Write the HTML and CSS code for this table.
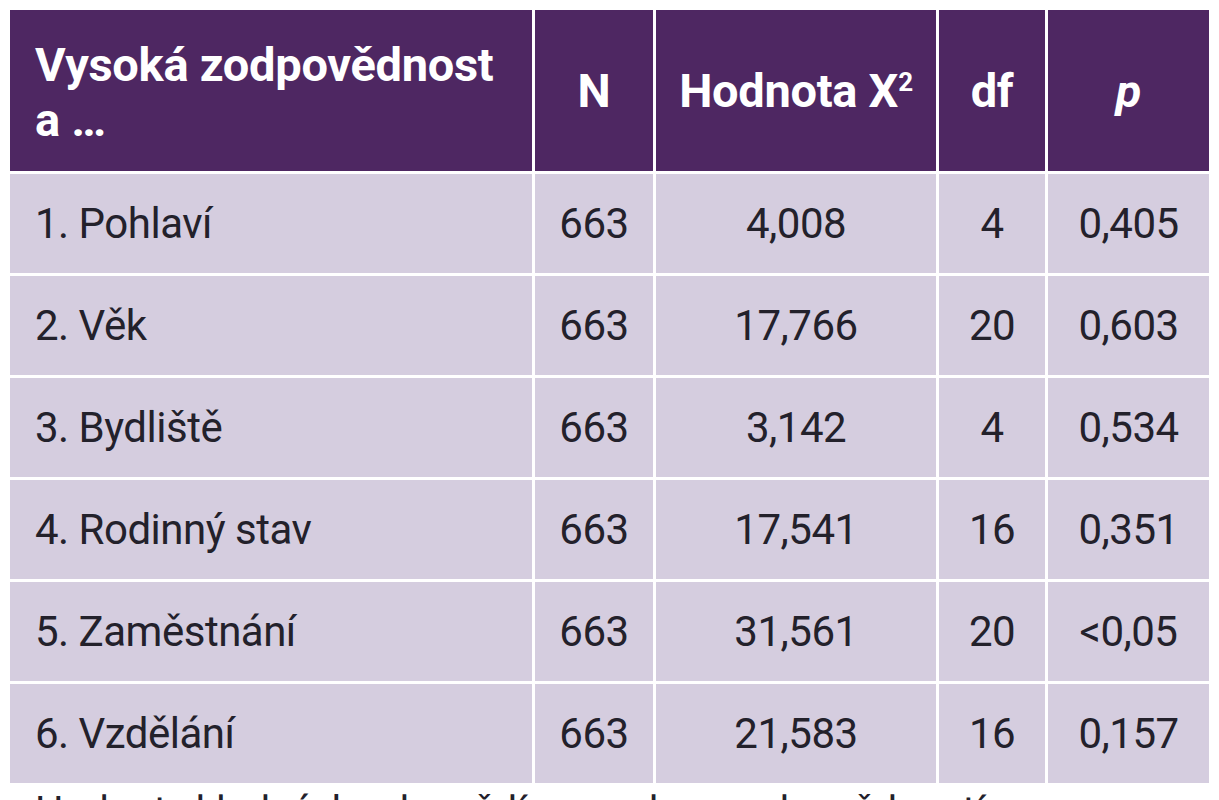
FILE: index.html
```html
<!DOCTYPE html>
<html lang="cs">
<head>
<meta charset="utf-8">
<title>Vysoká zodpovědnost</title>
<link rel="stylesheet" href="styles.css">
</head>
<body>
<table class="stats">
  <thead>
    <tr>
      <th class="c-label">Vysoká zodpovědnost<br>a …</th>
      <th class="c-n">N</th>
      <th class="c-x">Hodnota X<sup>2</sup></th>
      <th class="c-df">df</th>
      <th class="c-p"><i>p</i></th>
    </tr>
  </thead>
  <tbody>
    <tr><td class="c-label">1. Pohlaví</td><td>663</td><td>4,008</td><td>4</td><td>0,405</td></tr>
    <tr><td class="c-label">2. Věk</td><td>663</td><td>17,766</td><td>20</td><td>0,603</td></tr>
    <tr><td class="c-label">3. Bydliště</td><td>663</td><td>3,142</td><td>4</td><td>0,534</td></tr>
    <tr><td class="c-label">4. Rodinný stav</td><td>663</td><td>17,541</td><td>16</td><td>0,351</td></tr>
    <tr><td class="c-label">5. Zaměstnání</td><td>663</td><td>31,561</td><td>20</td><td>&lt;0,05</td></tr>
    <tr><td class="c-label">6. Vzdělání</td><td>663</td><td>21,583</td><td>16</td><td>0,157</td></tr>
  </tbody>
</table>
<p class="note">Hodnoty kladných odpovědí s vysokou zodpovědností</p>
</body>
</html>
```
FILE: styles.css
```css
html, body {
  margin: 0;
  padding: 0;
  background: #ffffff;
  overflow: hidden;
}
body {
  font-family: Roboto, "Noto Sans", sans-serif;
  color: #23212b;
}
.stats {
  margin: 7px 0 0 7px;
  border-collapse: separate;
  border-spacing: 3px;
  table-layout: fixed;
}
.stats th,
.stats td {
  padding: 0;
  text-align: center;
  vertical-align: middle;
}
.stats th {
  background: #4e2762;
  color: #ffffff;
  font-weight: 700;
  font-size: 47px;
  line-height: 55px;
  height: 159px;
  letter-spacing: -0.3px;
}
.stats td {
  background: #d5cddf;
  font-size: 42px;
  height: 99px;
  letter-spacing: -0.5px;
}
.stats .c-label {
  text-align: left;
  padding-left: 25px;
  width: 497px;
}
.stats th.c-label {
  padding-top: 2px;
}
.c-n { width: 118px; }
.c-x { width: 280px; }
.c-df { width: 106px; }
.c-p { width: 161px; }
.stats sup {
  font-size: 26px;
  line-height: 0;
  vertical-align: 16px;
}
.stats th i {
  font-style: italic;
}
.note {
  margin: 6px 0 0 35px;
  font-size: 40px;
  line-height: 40px;
  color: #23212b;
  white-space: nowrap;
}
```
